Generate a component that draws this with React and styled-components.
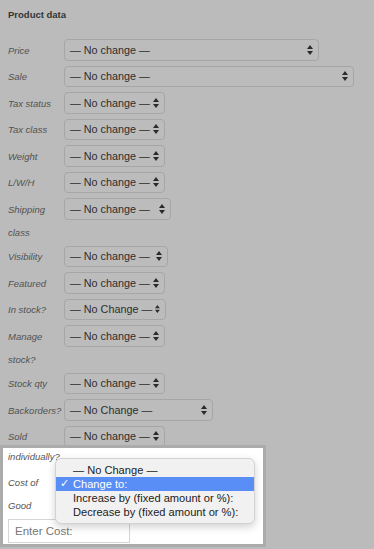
import React from "react";
import styled, { createGlobalStyle } from "styled-components";

const GlobalStyle = createGlobalStyle`
  html, body {
    margin: 0;
    background: #bbbbbb;
    font-family: "Liberation Sans", Arial, sans-serif;
  }
  * { box-sizing: border-box; }
`;

const rows = [
  { label: "Price", width: 255, value: "— No change —" },
  { label: "Sale", width: 290, value: "— No change —" },
  { label: "Tax status", width: 101, value: "— No change —" },
  { label: "Tax class", width: 101, value: "— No change —" },
  { label: "Weight", width: 101, value: "— No change —" },
  { label: "L/W/H", width: 101, value: "— No change —" },
  { label: "Shipping class", width: 107, value: "— No change —" },
  { label: "Visibility", width: 104, value: "— No change —" },
  { label: "Featured", width: 101, value: "— No change —" },
  { label: "In stock?", width: 102, value: "— No Change —" },
  { label: "Manage stock?", width: 101, value: "— No change —" },
  { label: "Stock qty", width: 101, value: "— No change —" },
  { label: "Backorders?", width: 149, value: "— No Change —" },
  { label: "Sold", width: 101, value: "— No change —" },
];

const options = [
  "— No Change —",
  "Change to:",
  "Increase by (fixed amount or %):",
  "Decrease by (fixed amount or %):",
];

function Arrows() {
  return (
    <svg width="6" height="10" viewBox="0 0 6 10">
      <path d="M0 4 L3 0 L6 4 Z" fill="#2a2a2a" />
      <path d="M0 6 L3 10 L6 6 Z" fill="#2a2a2a" />
    </svg>
  );
}

export default function App() {
  return (
    <>
      <GlobalStyle />
      <Page>
        <Title>Product data</Title>
        {rows.map((row) => (
          <Row key={row.label}>
            <Label>{row.label}</Label>
            <Select $width={row.width}>
              <span>{row.value}</span>
              <Arrows />
            </Select>
          </Row>
        ))}
        <Spotlight>
          <ContLabel>individually?</ContLabel>
          <CostRow>
            <Label>Cost of Good</Label>
          </CostRow>
          <CostInput placeholder="Enter Cost:" />
          <Menu>
            {options.map((opt, i) => (
              <MenuItem key={opt} $selected={i === 1}>
                <Check>{i === 1 ? "✓" : ""}</Check>
                {opt}
              </MenuItem>
            ))}
          </Menu>
        </Spotlight>
      </Page>
    </>
  );
}

const Page = styled.div`
  width: 374px;
  min-height: 549px;
  padding-top: 9px;
  background: #bbbbbb;
`;

const Title = styled.h2`
  margin: 0 0 17.5px;
  padding-left: 8px;
  font-size: 9.5px;
  line-height: 12px;
  font-weight: bold;
  color: #333;
`;

const Row = styled.div`
  display: grid;
  grid-template-columns: 56px auto;
  align-items: start;
  padding-left: 8px;
`;

const Label = styled.span`
  padding-right: 4px;
  padding-bottom: 1.5px;
  font-size: 9.5px;
  line-height: 23px;
  font-style: italic;
  color: #525252;
`;

const Select = styled.div`
  width: ${(p) => p.$width}px;
  height: 21.5px;
  margin: 0.5px 0 4.5px;
  padding: 0 5px 0 5px;
  display: flex;
  align-items: center;
  justify-content: space-between;
  gap: 3px;
  border: 1px solid #a6a6a6;
  border-radius: 4px;
  background: #bcbcbc;
  font-size: 10.8px;
  color: #2e2e2e;
  white-space: nowrap;
`;

const Spotlight = styled.div`
  position: relative;
  width: 266px;
  margin-top: -7px;
  padding: 0 5px 1px;
  border: 3px solid #ababab;
  background: #ffffff;
`;

const ContLabel = styled.div`
  font-size: 9.5px;
  line-height: 18px;
  font-style: italic;
  color: #555;
`;

const CostRow = styled.div`
  display: grid;
  grid-template-columns: 56px auto;
  margin-top: 5.5px;
`;

const CostInput = styled.input`
  display: block;
  width: 122px;
  height: 24px;
  padding: 0 6px;
  border: 1px solid #d6d6d6;
  border-radius: 0;
  font-family: "Liberation Sans", Arial, sans-serif;
  font-size: 11.5px;
  color: #333;
  background: #fff;
  &::placeholder {
    color: #777;
  }
`;

const Menu = styled.div`
  position: absolute;
  left: 52px;
  top: 10px;
  width: 200px;
  padding: 4px 0;
  background: #f1f1f1;
  border: 1px solid #d2d2d2;
  border-radius: 6px;
  box-shadow: 0 3px 9px rgba(0, 0, 0, 0.18);
`;

const MenuItem = styled.div`
  display: flex;
  align-items: center;
  height: 14px;
  font-size: 11.1px;
  white-space: nowrap;
  color: ${(p) => (p.$selected ? "#ffffff" : "#222")};
  background: ${(p) => (p.$selected ? "#5a8ef7" : "transparent")};
`;

const Check = styled.span`
  width: 17px;
  padding-left: 4px;
  font-family: "DejaVu Sans", sans-serif;
  font-size: 11px;
`;
